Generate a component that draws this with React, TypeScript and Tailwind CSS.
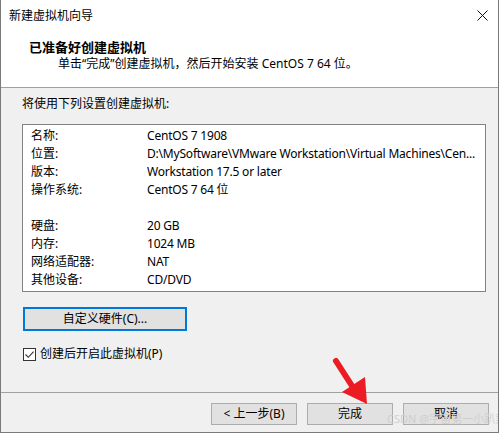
import React from 'react'

const FONT = { fontFamily: '"Noto Sans", "Noto Sans CJK SC", sans-serif' }

const settings: [string, string][] = [
  ['名称:', 'CentOS 7 1908'],
  ['位置:', 'D:\\MySoftware\\VMware Workstation\\Virtual Machines\\Cen...'],
  ['版本:', 'Workstation 17.5 or later'],
  ['操作系统:', 'CentOS 7 64 位'],
  ['', ''],
  ['硬盘:', '20 GB'],
  ['内存:', '1024 MB'],
  ['网络适配器:', 'NAT'],
  ['其他设备:', 'CD/DVD'],
]

export default function App() {
  return (
    <div
      className="relative flex h-[433px] w-[499px] flex-col overflow-hidden border-x border-b border-[#7a7a7a] bg-[#f0f0f0] text-[12px] text-black"
      style={FONT}
    >
      {/* title bar + wizard header share one white strip */}
      <div className="h-[88px] shrink-0 border-b border-[#a0a0a0] bg-white">
        <div className="flex h-[31px] items-center justify-between pl-[8px] pr-[10px]">
          <span className="text-[12px] leading-[16px]">新建虚拟机向导</span>
          <CloseIcon />
        </div>
        <div className="pl-[28px] pt-[8px] text-[13px] font-bold leading-[17px]">已准备好创建虚拟机</div>
        <div className="pl-[57px] text-[12px] leading-[16px]">
          单击“完成”创建虚拟机，然后开始安装 CentOS 7 64 位。
        </div>
      </div>

      <div className="flex flex-1 flex-col">
        <div className="pl-[21px] pt-[8px] leading-[16px]">将使用下列设置创建虚拟机:</div>

        <div className="ml-[21px] mt-[12px] h-[168px] w-[464px] overflow-hidden border border-[#828282] bg-white pt-[2px]">
          {settings.map(([label, value], i) => (
            <div key={i} className="flex h-[18px] items-center whitespace-nowrap leading-[16px]">
              <span className="w-[124px] shrink-0 pl-[8px]">{label}</span>
              <span className="tracking-[-0.2px]">{value}</span>
            </div>
          ))}
        </div>

        <button
          type="button"
          className="ml-[22px] mt-[15px] h-[24px] w-[164px] border-2 border-[#0078d7] bg-[#e1e1e1] text-[12px] leading-[16px]"
        >
          自定义硬件(C)...
        </button>

        <label className="ml-[22px] mt-[15px] flex h-[16px] items-center gap-[4px] leading-[16px]">
          <span className="flex h-[13px] w-[13px] items-center justify-center border border-[#333] bg-white">
            <svg width="11" height="11" viewBox="0 0 11 11" fill="none" stroke="#333" strokeWidth="1.1">
              <path d="M1.5 5.5l2.8 2.8L9.6 2.6" />
            </svg>
          </span>
          创建后开启此虚拟机(P)
        </label>

        <div className="mt-[30px] h-px bg-[#a0a0a0]" />

        <div className="flex justify-end gap-[10px] pr-[9px] pt-[10px]">
          <WizardButton label="< 上一步(B)" />
          <WizardButton label="完成" />
          <WizardButton label="取消" />
        </div>
      </div>

      {/* red annotation arrow over the finish button */}
      <svg className="pointer-events-none absolute left-0 top-0" width="499" height="433">
        <line x1="335" y1="361" x2="353" y2="389" stroke="#ec1c24" strokeWidth="6" strokeLinecap="round" />
        <polygon points="341,392 364,377 366,404" fill="#ec1c24" />
      </svg>

      <span className="pointer-events-none absolute left-[386px] top-[412px] whitespace-nowrap text-[11px] leading-[14px] text-[#cfcfcf]">
        CSDN @宇宙第一小趴菜
      </span>
    </div>
  )
}

function WizardButton({ label }: { label: string }) {
  return (
    <button
      type="button"
      className="h-[22px] w-[86px] border border-[#adadad] bg-[#e1e1e1] text-[12px] leading-[16px]"
    >
      {label}
    </button>
  )
}

function CloseIcon() {
  return (
    <svg width="11" height="11" viewBox="0 0 11 11" stroke="#111" strokeWidth="1">
      <path d="M0.5 0.5l10 10M10.5 0.5l-10 10" />
    </svg>
  )
}
